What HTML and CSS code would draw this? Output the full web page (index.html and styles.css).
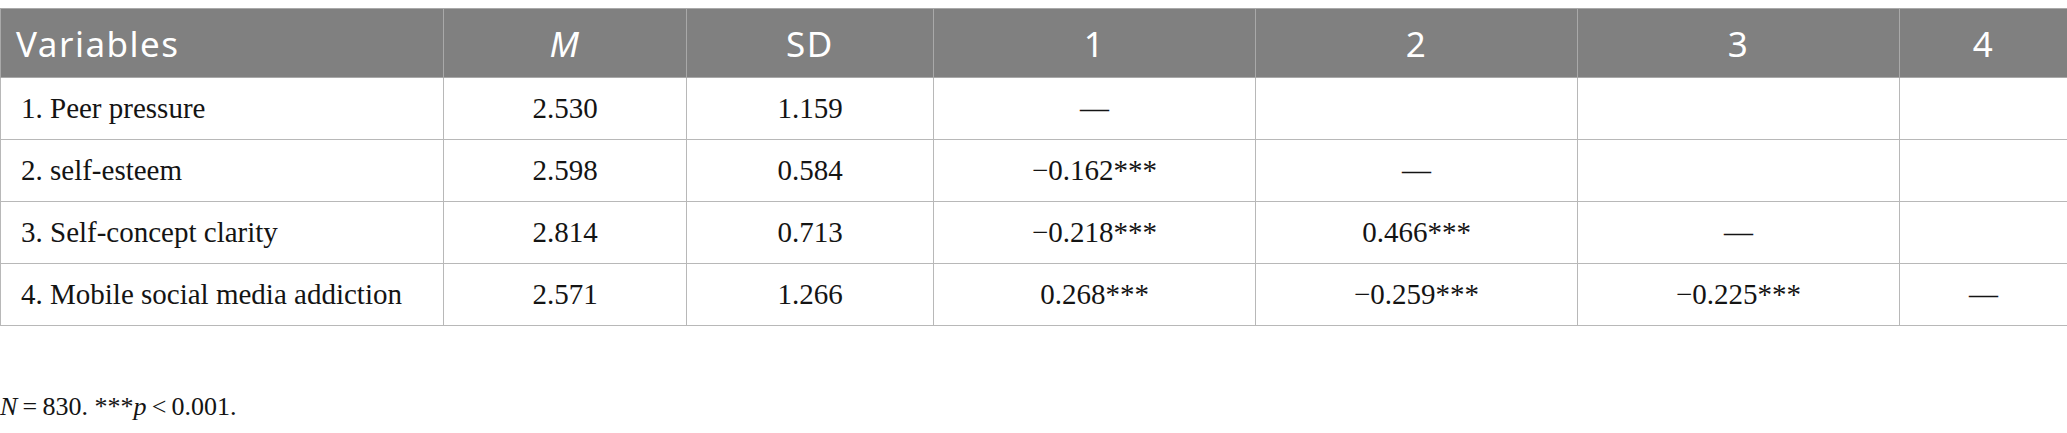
FILE: index.html
```html
<!DOCTYPE html>
<html lang="en">
<head>
<meta charset="utf-8">
<title>Correlation table</title>
<link rel="stylesheet" href="styles.css">
</head>
<body>
<table class="corr">
  <colgroup>
    <col class="c-var">
    <col class="c-m">
    <col class="c-sd">
    <col class="c-n">
    <col class="c-n">
    <col class="c-n">
    <col class="c-last">
  </colgroup>
  <thead>
    <tr>
      <th class="left">Variables</th>
      <th><i>M</i></th>
      <th>SD</th>
      <th>1</th>
      <th>2</th>
      <th>3</th>
      <th>4</th>
    </tr>
  </thead>
  <tbody>
    <tr>
      <td class="left">1. Peer pressure</td>
      <td>2.530</td>
      <td>1.159</td>
      <td>—</td>
      <td></td>
      <td></td>
      <td></td>
    </tr>
    <tr>
      <td class="left">2. self-esteem</td>
      <td>2.598</td>
      <td>0.584</td>
      <td>−0.162***</td>
      <td>—</td>
      <td></td>
      <td></td>
    </tr>
    <tr>
      <td class="left">3. Self-concept clarity</td>
      <td>2.814</td>
      <td>0.713</td>
      <td>−0.218***</td>
      <td>0.466***</td>
      <td>—</td>
      <td></td>
    </tr>
    <tr>
      <td class="left">4. Mobile social media addiction</td>
      <td>2.571</td>
      <td>1.266</td>
      <td>0.268***</td>
      <td>−0.259***</td>
      <td>−0.225***</td>
      <td>—</td>
    </tr>
  </tbody>
</table>
<p class="note"><i>N</i>&#8201;=&#8201;830. ***<i>p</i>&#8201;&lt;&#8201;0.001.</p>
</body>
</html>
```

FILE: styles.css
```css
html, body {
  margin: 0;
  padding: 0;
  background: #ffffff;
}

body {
  padding-top: 8px;
  font-family: "Liberation Serif", "Times New Roman", serif;
  color: #141414;
}

.corr {
  width: 2067px;
  border-collapse: collapse;
  table-layout: fixed;
}

.c-var { width: 443px; }
.c-m { width: 243px; }
.c-sd { width: 247px; }
.c-n { width: 322px; }
.c-last { width: 168px; }

.corr th,
.corr td {
  border: 1px solid #b8b8b8;
  text-align: center;
  vertical-align: middle;
  padding: 0 20px;
  white-space: nowrap;
}

.corr th {
  background: #808080;
  color: #ffffff;
  font-family: "Noto Sans", "Open Sans", sans-serif;
  font-weight: 400;
  font-size: 35px;
  letter-spacing: 1.5px;
  height: 68px;
  border-color: #a9a9a9;
}

.corr th.left {
  padding-left: 15px;
}

.corr td {
  font-size: 29px;
  height: 61px;
  color: #141414;
}

.corr .left {
  text-align: left;
}

.note {
  margin: 66px 0 0;
  font-size: 26px;
  color: #141414;
}
```
